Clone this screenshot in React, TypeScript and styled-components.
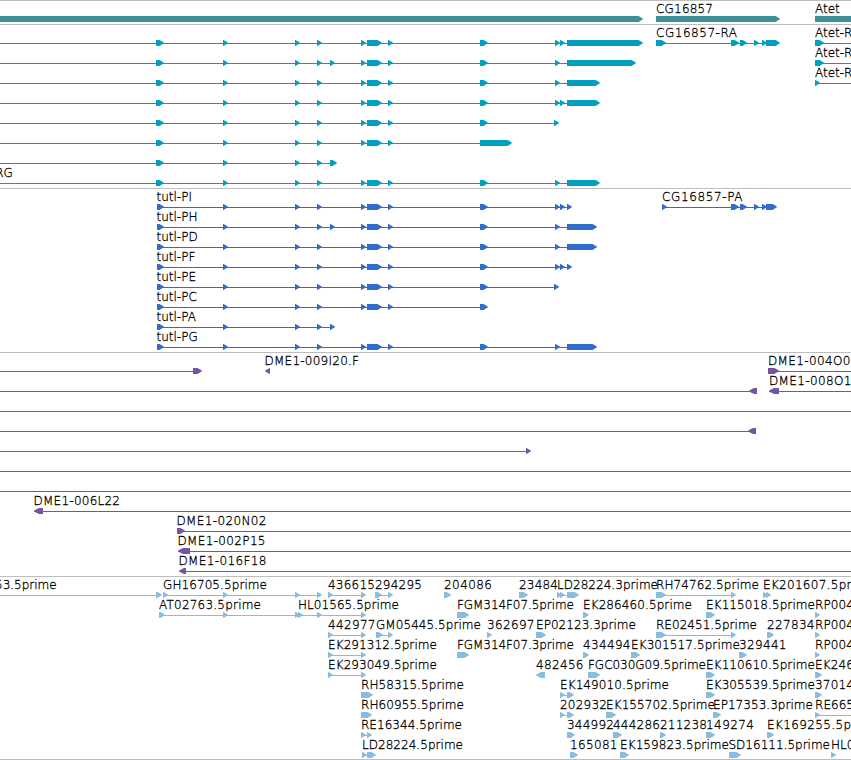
import React from "react";
import styled, { createGlobalStyle } from "styled-components";

type Label = [text: string, x: number, width?: number];
type Exon = [start: number, end: number];
interface Feature {
  exons: Exon[];
  label?: Label;
  reverse?: boolean;
  from?: number;
  to?: number;
}
interface TrackData {
  name: string;
  color: string;
  height: number;
  rows: Feature[][];
}

const VIEW = 851;
const ROW = 20;
const TIP = 5;

const GlobalStyle = createGlobalStyle`
  body {
    margin: 0;
    background: #fff;
    overflow: hidden;
  }
`;

const Browser = styled.main`
  display: flex;
  flex-direction: column;
  width: 851px;
  height: 760px;
  overflow: hidden;
  background: #fff;
`;

const Track = styled.section<{ $height: number; $color: string }>`
  display: flex;
  flex-direction: column;
  flex: none;
  box-sizing: border-box;
  height: ${(p) => p.$height}px;
  border-top: 1px solid #bebebe;
  color: ${(p) => p.$color};
`;

const Lane = styled.svg`
  display: block;
  flex: none;
  width: 851px;
  height: 20px;
  overflow: visible;
`;

const LaneLabel = styled.text`
  fill: #000;
  stroke: #000;
  stroke-width: 0.3px;
  font-family: "DejaVu Sans", sans-serif;
  font-size: 12px;
  font-weight: 200;
  white-space: pre;
`;

const EndRule = styled.div`
  flex: none;
  height: 1px;
  background: #bebebe;
`;

const f = (exons: Exon[], label?: Label, extra: Partial<Feature> = {}): Feature => ({
  exons,
  label,
  ...extra,
});
const rev = (exons: Exon[], label?: Label, extra: Partial<Feature> = {}): Feature =>
  f(exons, label, { reverse: true, ...extra });
const line = (): Feature => f([], undefined, { from: 0, to: VIEW });

const core: Exon[] = [[223, 228], [295, 300], [317, 322]];
const mid: Exon[] = [[361, 366], [367, 382], [388, 393]];
const e330: Exon = [330, 335];
const e480: Exon = [480, 488];
const e555: Exon = [555, 560];
const e560: Exon = [560, 565];

const rna = (tail: Exon[], label?: Label) =>
  f([[156, 164], ...core, ...tail], label, { from: 0 });
const protein = (name: string, tail: Exon[]) =>
  f([[157, 164], ...core, ...tail], [name, 156.5]);

const tracks: TrackData[] = [
  {
    name: "Genes",
    color: "#3f8f96",
    height: 24,
    rows: [
      [
        f([[-20, 643]]),
        f([[656, 780]], ["CG16857", 656, 57]),
        f([[815, 900]], ["Atet", 815]),
      ],
    ],
  },
  {
    name: "Transcripts",
    color: "#009fc1",
    height: 164,
    rows: [
      [
        rna([...mid, e480, e555, e560, [567, 643]]),
        f(
          [[656, 666], [731, 739], [740, 747], [754, 759], [762, 767], [766, 780]],
          ["CG16857-RA", 656, 81],
        ),
        f([[815, 824]], ["Atet-R", 815], { to: VIEW }),
      ],
      [
        rna([e330, ...mid, e480, e555, [567, 636]]),
        f([[815, 824]], ["Atet-R", 815], { to: VIEW }),
      ],
      [
        rna([...mid, e480, e555, [567, 600]]),
        f([[815, 820]], ["Atet-R", 815], { to: VIEW }),
      ],
      [rna([...mid, e480, e555, e560, [567, 600]])],
      [rna([...mid, e480, [554, 559]])],
      [rna([...mid, [480, 512]])],
      [rna([[330, 337]])],
      [rna([...mid, e480, e555, [567, 600]], ["tutl-RG", -29.5])],
    ],
  },
  {
    name: "Proteins",
    color: "#316ccc",
    height: 164,
    rows: [
      [
        protein("tutl-PI", [...mid, e480, e555, e560, [567, 572]]),
        f(
          [[662, 667], [731, 739], [740, 747], [754, 759], [762, 767], [766, 777]],
          ["CG16857-PA", 662, 80.5],
        ),
      ],
      [protein("tutl-PH", [e330, ...mid, e480, e555, [567, 597]])],
      [protein("tutl-PD", [...mid, e480, e555, [567, 597]])],
      [protein("tutl-PF", [...mid, e480, e555, e560, [567, 572]])],
      [protein("tutl-PE", [...mid, e480, [554, 559]])],
      [protein("tutl-PC", [...mid, e480])],
      [protein("tutl-PA", [e330])],
      [protein("tutl-PG", [...mid, e480, e555, [567, 597]])],
    ],
  },
  {
    name: "BAC ends",
    color: "#7455a5",
    height: 224,
    rows: [
      [
        f([[193, 202]], undefined, { from: 0 }),
        rev([[265, 270]], ["DME1-009I20.F", 264.5, 94.5]),
        f([[768, 779]], ["DME1-004O0", 768, 82.5], { to: VIEW }),
      ],
      [
        rev([[749, 757]], undefined, { from: 0 }),
        rev([[769, 779]], ["DME1-008O1", 769, 82.5], { to: VIEW }),
      ],
      [line()],
      [rev([[748, 756]], undefined, { from: 0 })],
      [f([[526, 531]], undefined, { from: 0 })],
      [line()],
      [line()],
      [rev([[34, 43]], ["DME1-006L22", 33.5, 86.5], { to: VIEW })],
      [f([[177, 185]], ["DME1-020N02", 176.5, 90], { to: VIEW })],
      [rev([[178, 190]], ["DME1-002P15", 177.5, 88], { to: VIEW })],
      [rev([[179, 186]], ["DME1-016F18", 178.5, 88], { to: VIEW })],
    ],
  },
  {
    name: "ESTs",
    color: "#88bddd",
    height: 183,
    rows: [
      [
        f([[156, 162]], ["53.5prime", -5], { from: 0 }),
        f([[163, 168], ...core], ["GH16705.5prime", 163, 104]),
        f([[328, 333], [361, 366]], ["436615", 328, 47]),
        f([[375, 382], [388, 393]], ["294295", 375, 47]),
        f([[444, 451]], ["204086", 444, 48]),
        f([[519, 528]], ["23484", 519, 39]),
        f([[557, 562], [560, 565], [567, 579]], ["LD28224.3prime", 557, 101]),
        f([[656, 666], [731, 736]], ["RH74762.5prime", 656, 103]),
        f([[763, 768], [766, 771]], ["EK201607.5pr", 763, 88.5]),
      ],
      [
        f([[159, 165], [223, 228], [295, 300]], ["AT02763.5prime", 159, 102]),
        f([[298, 303], [317, 322], [361, 366]], ["HL01565.5prime", 298, 101]),
        f([[457, 469]], ["FGM314F07.5prime", 457, 117]),
        f([[583, 589]], ["EK286460.5prime", 583, 109]),
        f([[706, 715]], ["EK115018.5prime", 706, 109]),
        f([[815, 820]], ["RP004", 815, 39]),
      ],
      [
        f([[328, 333], [361, 366]], ["442977", 328, 47.5]),
        f([[376, 383], [388, 393]], ["GM05445.5prime", 376, 105]),
        f([[487, 492]], ["362697", 487, 47.5]),
        f([[536, 546]], ["EP02123.3prime", 536, 100]),
        f([[656, 666], [731, 736]], ["RE02451.5prime", 656, 101]),
        f([[767, 774]], ["227834", 767, 47.5]),
        f([[815, 820]], ["RP004", 815, 39]),
      ],
      [
        f([[328, 333], [361, 366]], ["EK291312.5prime", 328, 109]),
        f([[457, 469]], ["FGM314F07.3prime", 457, 117]),
        f([[583, 589]], ["434494", 583, 47.5]),
        f([[631, 640]], ["EK301517.5prime", 631, 109]),
        f([[739, 747]], ["329441", 739, 47.5]),
        f([[815, 820]], ["RP004", 815, 39]),
      ],
      [
        f([[328, 333], [361, 366]], ["EK293049.5prime", 328, 109]),
        rev([[536, 545]], ["482456", 536, 47.5]),
        f([[588, 600]], ["FGC030G09.5prime", 588, 118]),
        f([[706, 715]], ["EK110610.5prime", 706, 109]),
        f([[815, 822]], ["EK246", 815, 39]),
      ],
      [
        f([[361, 373]], ["RH58315.5prime", 361, 103]),
        f([[560, 565], [567, 574]], ["EK149010.5prime", 560, 109]),
        f([[706, 715]], ["EK305539.5prime", 706, 109]),
        f([[815, 822]], ["37014", 815, 39]),
      ],
      [
        f([[361, 372]], ["RH60955.5prime", 361, 103]),
        f([[560, 565], [567, 574]], ["202932", 560, 47]),
        f([[606, 616]], ["EK155702.5prime", 606, 109]),
        f([[713, 721]], ["EP17353.3prime", 713, 100]),
        f([[815, 820]], ["RE665", 815, 39], { to: VIEW }),
      ],
      [
        f([[361, 366], [367, 372]], ["RE16344.5prime", 361, 101]),
        f([[567, 575]], ["344992", 567, 47]),
        f([[613, 622]], ["444286", 613, 47]),
        f([[660, 666]], ["211238", 660, 47]),
        f([[706, 715]], ["149274", 706, 48]),
        f([[767, 774]], ["EK169255.5p", 767, 84]),
      ],
      [
        f([[362, 367], [367, 376]], ["LD28224.5prime", 362, 101]),
        f([[570, 578]], ["165081", 570, 47.5]),
        f([[620, 629]], ["EK159823.5prime", 620, 109]),
        f([[729, 741]], ["SD16111.5prime", 728.5, 101.5]),
        f([[831, 836]], ["HL0", 831]),
      ],
    ],
  },
];

function arrowPath([a, b]: Exon, reverse?: boolean) {
  const tip = Math.min(TIP, b - a);
  return reverse
    ? `M${b} 15H${a + tip}L${a + 1} 17L${a} 18L${a + 1} 19L${a + tip} 21H${b}Z`
    : `M${a} 15H${b - tip + 0.5}L${b - 1} 17L${b + 0.2} 17.9L${b - 1} 18.8L${b - tip + 0.5} 21H${a}Z`;
}

function FeatureGlyph({ exons, label, reverse, from, to }: Feature) {
  const x1 = from ?? exons[0][0];
  const x2 = to ?? exons[exons.length - 1][1];
  const joined = exons.length !== 1 || from !== undefined || to !== undefined;
  const end = to === undefined && exons.length ? x2 - 3 : x2;
  return (
    <g>
      {joined && (
        <rect x={x1} y={18} width={end - x1} height={1} fill="currentColor" shapeRendering="crispEdges" />
      )}
      {exons.map((exon, i) => (
        <path key={i} d={arrowPath(exon, reverse)} fill="currentColor" />
      ))}
      {label && (
        <LaneLabel x={label[1]} y={12} textLength={label[2]}>
          {label[0]}
        </LaneLabel>
      )}
    </g>
  );
}

export default function App() {
  return (
    <>
      <GlobalStyle />
      <Browser>
        {tracks.map((track) => (
          <Track key={track.name} $height={track.height} $color={track.color} aria-label={track.name}>
            {track.rows.map((row, i) => (
              <Lane key={i} viewBox={`0 0 ${VIEW} ${ROW}`}>
                {row.map((feature, j) => (
                  <FeatureGlyph key={j} {...feature} />
                ))}
              </Lane>
            ))}
          </Track>
        ))}
        <EndRule />
      </Browser>
    </>
  );
}
